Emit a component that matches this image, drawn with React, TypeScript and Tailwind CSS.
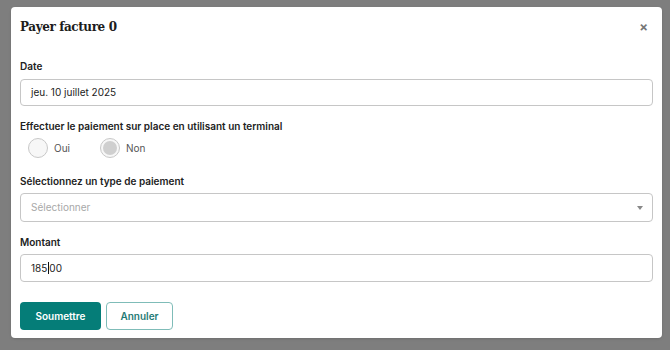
import { useState } from 'react';

function Radio({ label, checked }: { label: string; checked?: boolean }) {
  return (
    <label className="flex items-center gap-[6px]">
      <span className="flex h-[20px] w-[20px] items-center justify-center rounded-full border border-[#c8c8c8] bg-[#f7f7f7]">
        {checked && <span className="h-[14px] w-[14px] rounded-full bg-[#cfcfcf]" />}
      </span>
      <span className="text-[10px] text-[#555]">{label}</span>
    </label>
  );
}

export default function App() {
  const [paid] = useState('non');

  return (
    <div className="h-[350px] w-[670px] overflow-hidden bg-[#7e7e7e] pt-[7px] pl-[11px] font-['Inter',sans-serif]">
      <div className="w-[651px] rounded-[4px] bg-white px-[9px] pt-[11px] pb-[8px] shadow">
        {/* header */}
        <div className="flex items-center justify-between">
          <h2 className="font-['DejaVu_Serif',serif] text-[12px] font-bold tracking-[-0.4px] text-[#1c1c1c]">
            Payer facture 0
          </h2>
          <span className="mr-[5px] text-[13px] font-bold leading-none text-[#777]">×</span>
        </div>

        <div className="mt-[23px] flex flex-col">
          <label className="text-[10px] font-semibold text-[#222]">Date</label>
          <div className="mt-[5px] flex h-[27px] items-center rounded-[4px] border border-[#c6c6c6] px-[10px] text-[10px] text-[#222]">
            jeu. 10 juillet 2025
          </div>

          <label className="mt-[13px] text-[10px] font-semibold text-[#222]">
            Effectuer le paiement sur place en utilisant un terminal
          </label>
          <div className="mt-[4px] flex items-center gap-[30px] pl-[8px]">
            <Radio label="Oui" checked={paid === 'oui'} />
            <Radio label="Non" checked={paid === 'non'} />
          </div>

          <label className="mt-[16px] text-[10px] font-semibold text-[#222]">
            Sélectionnez un type de paiement
          </label>
          <div className="mt-[4px] flex h-[29px] items-center justify-between rounded-[4px] border border-[#c6c6c6] pr-[9px] pl-[10px]">
            <span className="text-[10px] text-[#a8a8a8]">Sélectionner</span>
            <svg width="6" height="4" viewBox="0 0 6 4">
              <path d="M0 0h6L3 4z" fill="#888" />
            </svg>
          </div>

          <label className="mt-[13px] text-[10px] font-semibold text-[#222]">Montant</label>
          <div className="mt-[4px] flex h-[28px] items-center rounded-[4px] border border-[#c6c6c6] px-[10px] text-[10px] text-[#222]">
            185<span className="mx-[0.5px] inline-block h-[12px] w-[1px] bg-[#111]" />00
          </div>

          <div className="mt-[20px] flex gap-[5px]">
            <button className="h-[28px] w-[81px] rounded-[4px] bg-[#057d78] text-[10px] font-semibold text-white">
              Soumettre
            </button>
            <button className="h-[28px] w-[67px] rounded-[4px] border border-[#7fbcb8] bg-white text-[10px] font-semibold text-[#1f7a75]">
              Annuler
            </button>
          </div>
        </div>
      </div>
    </div>
  );
}
